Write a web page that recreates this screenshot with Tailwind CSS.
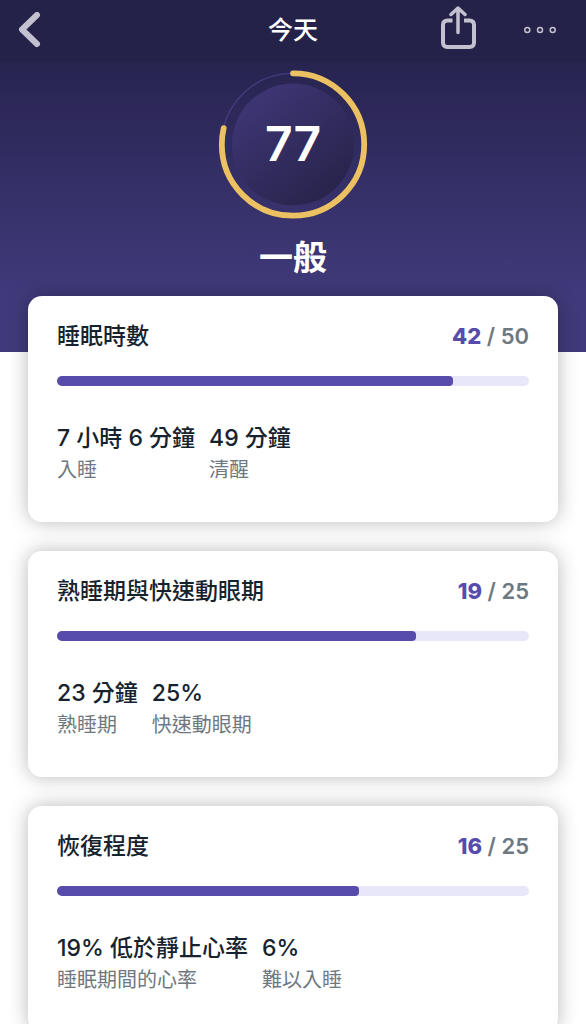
<!DOCTYPE html>
<html lang="zh-Hant">
<head>
  <meta charset="UTF-8" />
  <meta name="viewport" content="width=device-width, initial-scale=1.0" />
  <title>今天</title>

  <!-- Tailwind CSS -->
  <script src="https://cdn.jsdelivr.net/npm/@tailwindcss/browser@4"></script>
</head>
<body class="bg-white font-['Inter','Noto_Sans_CJK_TC',sans-serif] text-[#16232e]">

  <!-- Nav bar -->
  <header class="grid h-[62px] grid-cols-[1fr_auto_1fr] items-center bg-[#252249] px-[18px] pb-0.5 text-[#c3c0cf]">
    <button type="button" aria-label="返回" class="justify-self-start">
      <svg class="h-9 w-6" viewBox="0 0 24 36" fill="none" stroke="currentColor" stroke-width="6" stroke-linecap="round" stroke-linejoin="round">
        <path d="M19 3 L4 17.500 L19 32" />
      </svg>
    </button>
    <h1 class="text-[25px] leading-8 font-medium text-white">今天</h1>
    <div class="flex items-center gap-12 justify-self-end pr-3">
      <button type="button" aria-label="分享">
        <svg class="h-12 w-9" viewBox="0 0 36 48" fill="none" stroke="currentColor" stroke-width="4" stroke-linecap="round" stroke-linejoin="round">
          <path d="M18 26.500 V3 M11 8.500 L18 2 L25 8.500" stroke-width="3.500" />
          <path d="M12.500 14.500 H7.500 Q3 14.500 3 19 V36.500 Q3 41 7.500 41 H29.500 Q34 41 34 36.500 V19 Q34 14.500 29.500 14.500 H24" stroke-linecap="butt" />
        </svg>
      </button>
      <button type="button" aria-label="更多">
        <svg class="h-4 w-8" viewBox="0 0 32 16" fill="none" stroke="currentColor" stroke-width="1.500">
          <circle cx="3.300" cy="8" r="2.500" />
          <circle cx="16" cy="8" r="2.500" />
          <circle cx="28.700" cy="8" r="2.500" />
        </svg>
      </button>
    </div>
  </header>

  <!-- Score -->
  <section class="flex h-[290px] flex-col items-center bg-linear-to-b from-[#282450] to-[#403a7b] to-80% pt-1.5">
    <div class="relative size-[152px]">
      <svg class="size-full" viewBox="0 0 152 152" fill="none">
        <defs>
          <linearGradient id="disc" x1="0.15" y1="0.1" x2="0.8" y2="0.9">
            <stop offset="0" stop-color="#3d3675" />
            <stop offset="1" stop-color="#29244c" />
          </linearGradient>
        </defs>
        <circle cx="76" cy="76.500" r="61" fill="url(#disc)" />
        <circle cx="76" cy="76.500" r="71.200" stroke="#403a7b" stroke-width="1.500" />
        <circle cx="76" cy="76.500" r="71.200" stroke="#ecc162" stroke-width="5.800" stroke-linecap="round" pathLength="100" stroke-dasharray="78.700 100" transform="rotate(-90 76 76.500)" />
      </svg>
      <span class="absolute inset-0 flex items-center justify-center text-5xl font-semibold text-white">77</span>
    </div>
    <p class="mt-4 text-[34px] leading-11 font-semibold text-white">一般</p>
  </section>

  <main class="-mt-14 flex flex-col gap-[29px] px-7 pb-7">

    <!-- Time asleep -->
    <section class="relative rounded-[14px] bg-white px-[29px] pt-6 pb-9 shadow-[0_0_20px_rgba(0,0,0,0.28)]">
      <div class="flex items-center justify-between leading-8">
        <h2 class="text-[23px] font-medium">睡眠時數</h2>
        <p class="text-[22px] font-semibold text-[#6e7880]"><span class="font-extrabold text-[#574cab]">42</span> / 50</p>
      </div>
      <div class="mt-6 h-2.5 overflow-hidden rounded-full bg-[#e8e6f9]" role="progressbar" aria-label="睡眠時數" aria-valuenow="42" aria-valuemax="50">
        <div class="h-full rounded-r-sm bg-[#574cab]" style="width: 84%"></div>
      </div>
      <dl class="mt-9 flex gap-3.5">
        <div class="flex flex-col-reverse">
          <dt class="text-xl leading-8 text-[#6e7880]">入睡</dt>
          <dd class="text-[23px] leading-8 font-medium">7 小時 6 分鐘</dd>
        </div>
        <div class="flex flex-col-reverse">
          <dt class="text-xl leading-8 text-[#6e7880]">清醒</dt>
          <dd class="text-[23px] leading-8 font-medium">49 分鐘</dd>
        </div>
      </dl>
    </section>

    <!-- Deep and REM -->
    <section class="relative rounded-[14px] bg-white px-[29px] pt-6 pb-9 shadow-[0_0_20px_rgba(0,0,0,0.28)]">
      <div class="flex items-center justify-between leading-8">
        <h2 class="text-[23px] font-medium">熟睡期與快速動眼期</h2>
        <p class="text-[22px] font-semibold text-[#6e7880]"><span class="font-extrabold text-[#574cab]">19</span> / 25</p>
      </div>
      <div class="mt-6 h-2.5 overflow-hidden rounded-full bg-[#e8e6f9]" role="progressbar" aria-label="熟睡期與快速動眼期" aria-valuenow="19" aria-valuemax="25">
        <div class="h-full rounded-r-sm bg-[#574cab]" style="width: 76%"></div>
      </div>
      <dl class="mt-9 flex gap-3.5">
        <div class="flex flex-col-reverse">
          <dt class="text-xl leading-8 text-[#6e7880]">熟睡期</dt>
          <dd class="text-[23px] leading-8 font-medium">23 分鐘</dd>
        </div>
        <div class="flex flex-col-reverse">
          <dt class="text-xl leading-8 text-[#6e7880]">快速動眼期</dt>
          <dd class="text-[23px] leading-8 font-medium">25%</dd>
        </div>
      </dl>
    </section>

    <!-- Restoration -->
    <section class="relative rounded-[14px] bg-white px-[29px] pt-6 pb-9 shadow-[0_0_20px_rgba(0,0,0,0.28)]">
      <div class="flex items-center justify-between leading-8">
        <h2 class="text-[23px] font-medium">恢復程度</h2>
        <p class="text-[22px] font-semibold text-[#6e7880]"><span class="font-extrabold text-[#574cab]">16</span> / 25</p>
      </div>
      <div class="mt-6 h-2.5 overflow-hidden rounded-full bg-[#e8e6f9]" role="progressbar" aria-label="恢復程度" aria-valuenow="16" aria-valuemax="25">
        <div class="h-full rounded-r-sm bg-[#574cab]" style="width: 64%"></div>
      </div>
      <dl class="mt-9 flex gap-3.5">
        <div class="flex flex-col-reverse">
          <dt class="text-xl leading-8 text-[#6e7880]">睡眠期間的心率</dt>
          <dd class="text-[23px] leading-8 font-medium">19% 低於靜止心率</dd>
        </div>
        <div class="flex flex-col-reverse">
          <dt class="text-xl leading-8 text-[#6e7880]">難以入睡</dt>
          <dd class="text-[23px] leading-8 font-medium">6%</dd>
        </div>
      </dl>
    </section>
  </main>
</body>
</html>
